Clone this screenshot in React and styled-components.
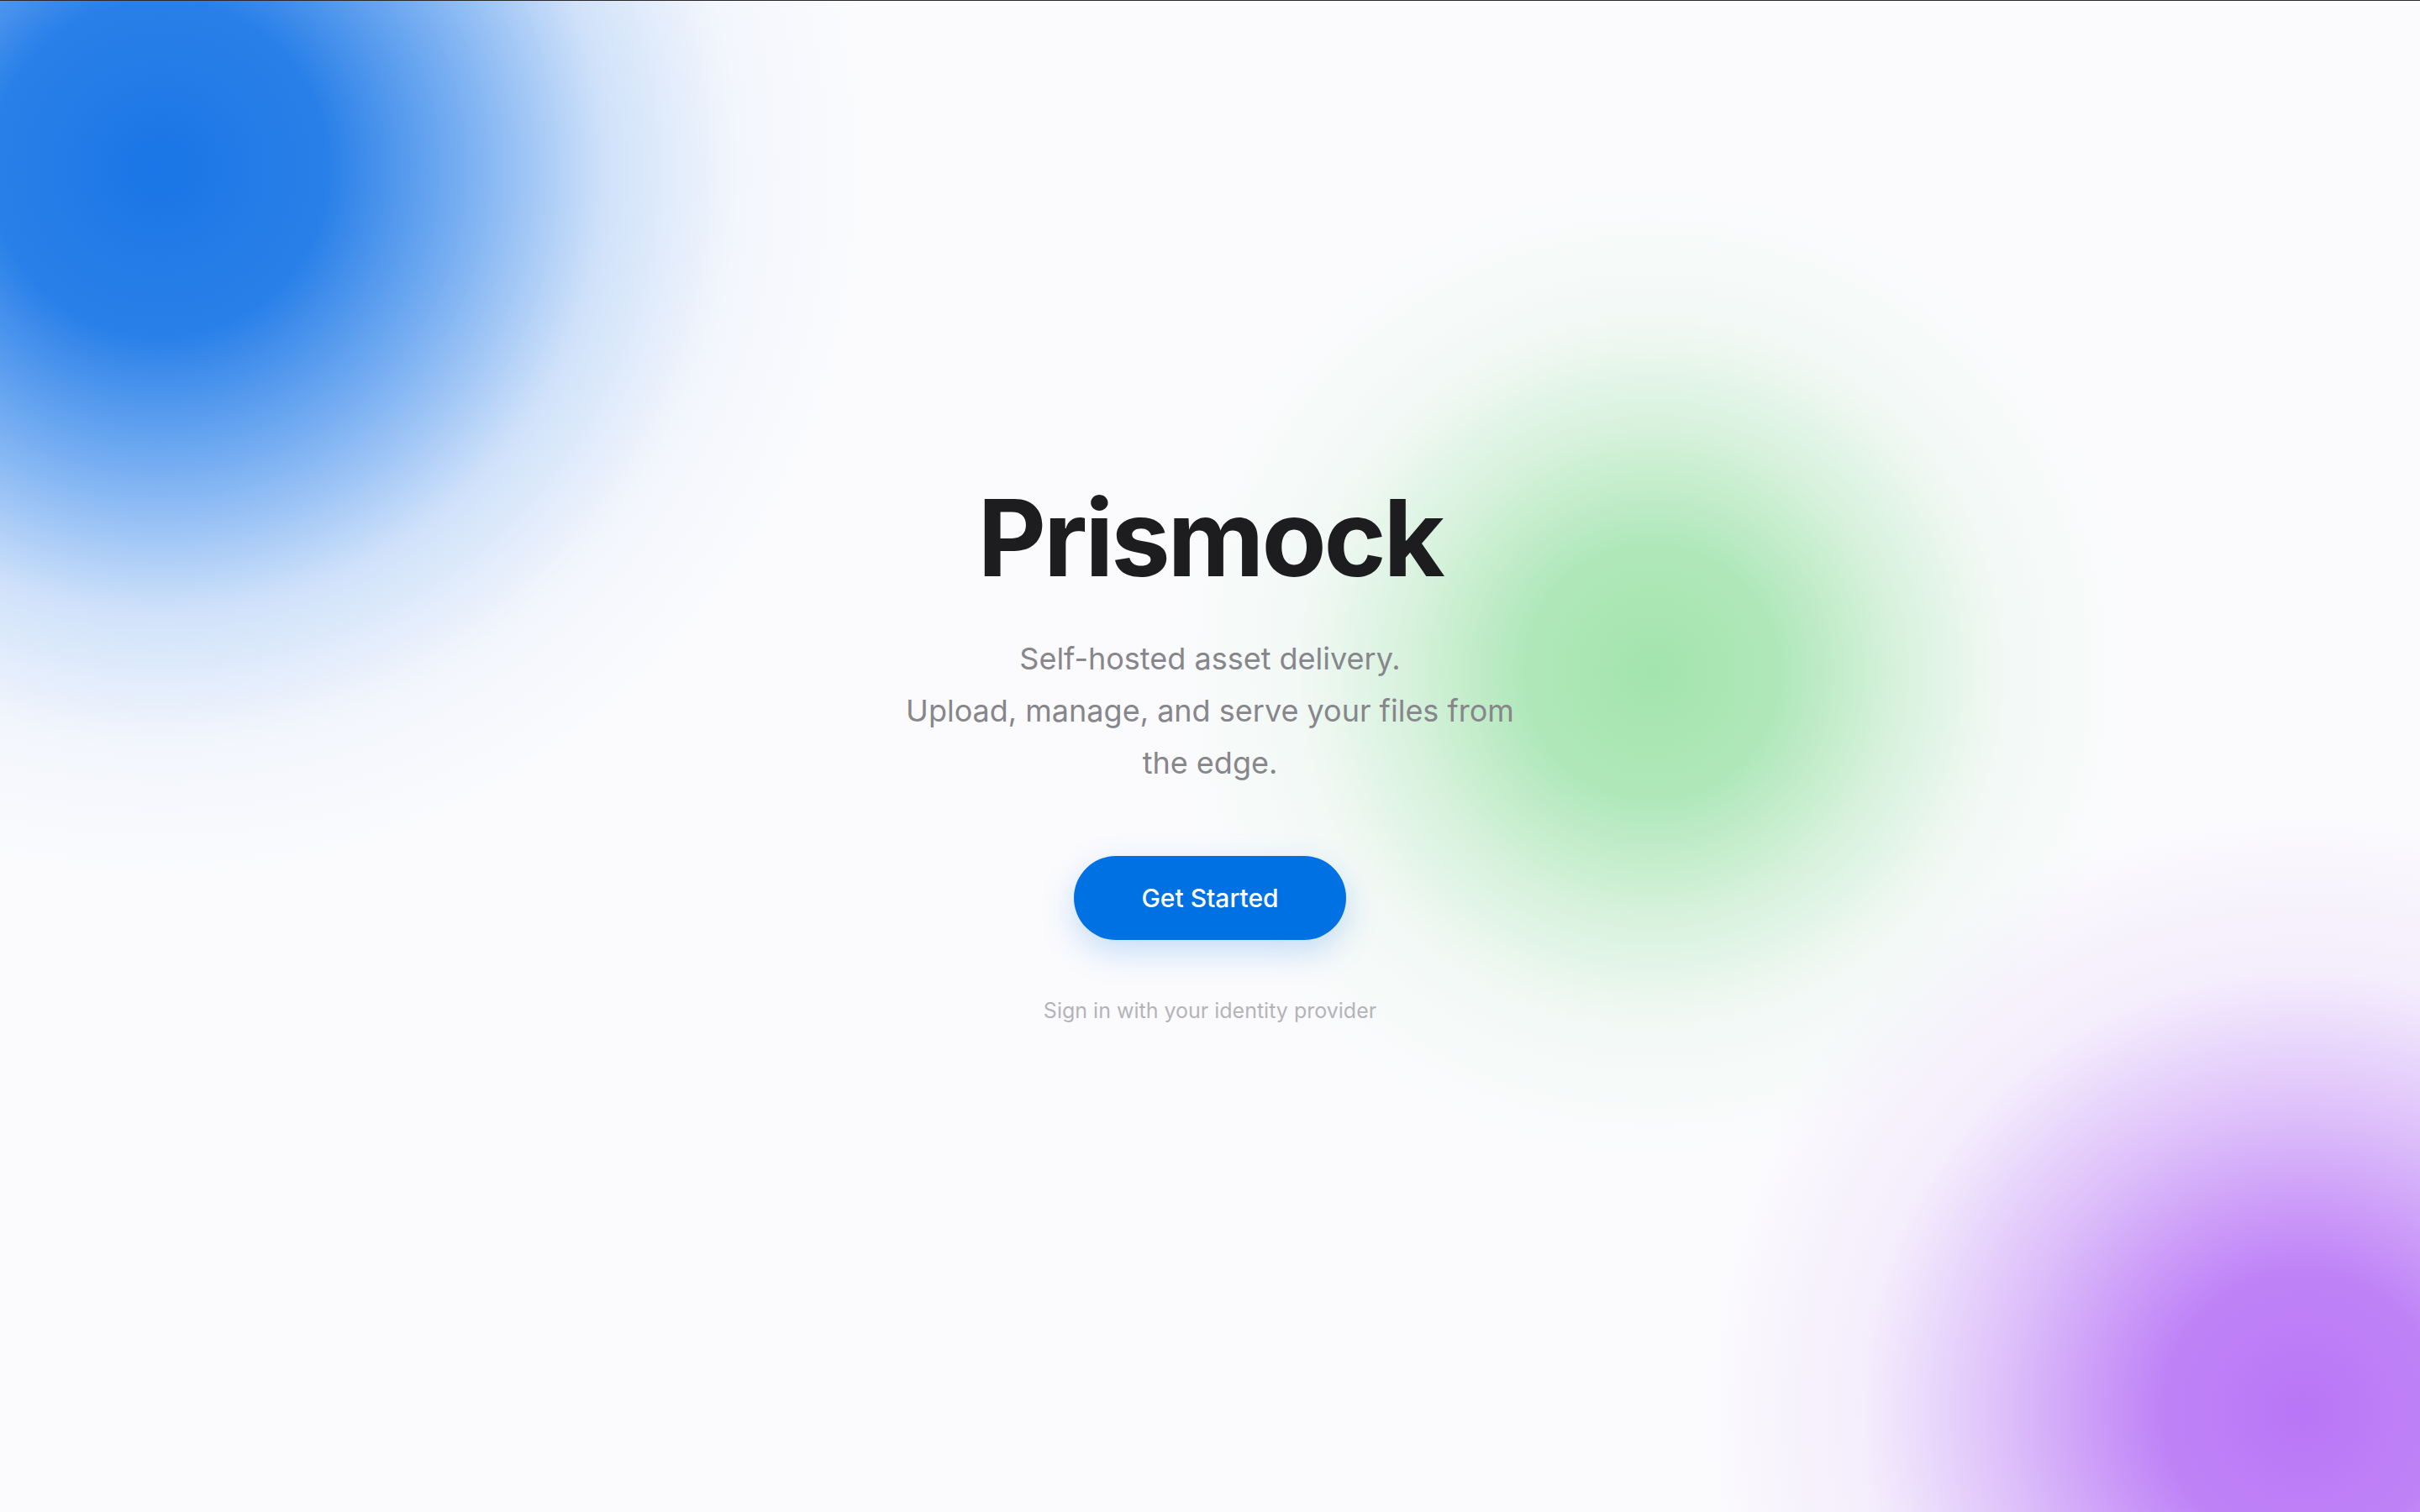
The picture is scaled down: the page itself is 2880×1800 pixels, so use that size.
import React from "react";
import styled, { createGlobalStyle } from "styled-components";

const GlobalStyle = createGlobalStyle`
  * { box-sizing: border-box; }
  html, body { margin: 0; padding: 0; }
  body {
    font-family: Inter, "Noto Sans", "Liberation Sans", sans-serif;
    background: #fbfbfd;
    -webkit-font-smoothing: antialiased;
  }
`;

const Page = styled.main`
  min-height: 100vh;
  display: flex;
  align-items: center;
  justify-content: center;
  box-shadow: inset 0 1px 0 #2a2a2e;
  background-color: #fbfbfd;
  background-image:
    radial-gradient(circle at 190px 200px,
      rgba(26, 118, 230, 1) 0px,
      rgba(28, 120, 231, 0.94) 200px,
      rgba(40, 128, 235, 0.6) 370px,
      rgba(70, 145, 240, 0.24) 530px,
      rgba(120, 170, 245, 0.06) 690px,
      rgba(251, 251, 253, 0) 860px),
    radial-gradient(circle at 1966px 800px,
      rgba(163, 228, 174, 1) 0px,
      rgba(163, 228, 174, 0.86) 150px,
      rgba(170, 230, 180, 0.45) 290px,
      rgba(190, 235, 198, 0.14) 420px,
      rgba(220, 242, 225, 0) 580px),
    radial-gradient(circle at 2740px 1680px,
      rgba(185, 118, 246, 1) 0px,
      rgba(185, 118, 246, 0.9) 170px,
      rgba(195, 140, 247, 0.55) 350px,
      rgba(215, 180, 250, 0.2) 520px,
      rgba(235, 220, 252, 0) 720px);
`;

const Hero = styled.section`
  display: flex;
  flex-direction: column;
  align-items: center;
  text-align: center;
  padding-bottom: 8px;
`;

const Title = styled.h1`
  margin: 0;
  font-size: 126px;
  line-height: 1.1;
  font-weight: 700;
  letter-spacing: -0.025em;
  color: #1d1d1f;
`;

const Tagline = styled.p`
  margin: 44px 0 0;
  max-width: 750px;
  font-size: 36px;
  line-height: 62px;
  font-weight: 400;
  color: #86868b;
`;

const CTA = styled.button`
  margin-top: 80px;
  height: 100px;
  width: 324px;
  padding: 0;
  border: none;
  border-radius: 999px;
  background: #0071e3;
  color: #fff;
  font-family: inherit;
  font-size: 30px;
  font-weight: 500;
  box-shadow: 0 14px 40px rgba(0, 113, 227, 0.22);
  cursor: pointer;
`;

const Hint = styled.p`
  margin: 66px 0 0;
  font-size: 25px;
  line-height: 36px;
  color: #b4b4b8;
`;

export default function App() {
  return (
    <>
      <GlobalStyle />
      <Page>
        <Hero>
          <Title>Prismock</Title>
          <Tagline>
            Self-hosted asset delivery.
            <br />
            Upload, manage, and serve your files from the edge.
          </Tagline>
          <CTA>Get Started</CTA>
          <Hint>Sign in with your identity provider</Hint>
        </Hero>
      </Page>
    </>
  );
}
